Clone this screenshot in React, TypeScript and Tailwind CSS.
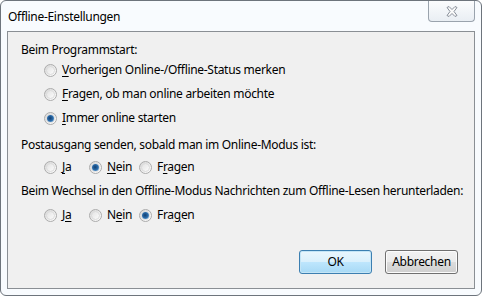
import React from 'react';

type Opt = { label: string; key: number; checked?: boolean };

function Radio({ checked }: { checked?: boolean }) {
  return (
    <span className="relative inline-flex h-[13px] w-[13px] shrink-0 items-center justify-center rounded-full border border-[#acacac] bg-[linear-gradient(135deg,#d6d6d6,#f4f4f4_70%,#ffffff)]">
      <span className="h-[9px] w-[9px] rounded-full border border-[#dcdcdc] bg-[linear-gradient(135deg,#e4e4e4,#fbfbfb)]" />
      {checked && (
        <span className="absolute h-[7px] w-[7px] rounded-full bg-[radial-gradient(circle_at_45%_45%,#123f70,#2a6aa8_50%,#8cc4ee)]" />
      )}
    </span>
  );
}

function Label({ text, k }: { text: string; k: number }) {
  return (
    <span className="whitespace-nowrap">
      {text.slice(0, k)}
      <span className="underline underline-offset-2">{text[k]}</span>
      {text.slice(k + 1)}
    </span>
  );
}

function Option({ o, className = '' }: { o: Opt; className?: string }) {
  return (
    <div className={`flex items-center gap-[5px] ${className}`}>
      <Radio checked={o.checked} />
      <Label text={o.label} k={o.key} />
    </div>
  );
}

const startOpts: Opt[] = [
  { label: 'Vorherigen Online-/Offline-Status merken', key: 0 },
  { label: 'Fragen, ob man online arbeiten möchte', key: 0 },
  { label: 'Immer online starten', key: 0, checked: true },
];

const sendOpts: Opt[] = [
  { label: 'Ja', key: 0 },
  { label: 'Nein', key: 0, checked: true },
  { label: 'Fragen', key: 1 },
];

const downOpts: Opt[] = [
  { label: 'Ja', key: 1 },
  { label: 'Nein', key: 1 },
  { label: 'Fragen', key: 3, checked: true },
];

function InlineRow({ opts }: { opts: Opt[] }) {
  return (
    <div className="flex h-6 items-center pl-[23px]">
      <Option o={opts[0]} className="w-[45px]" />
      <Option o={opts[1]} className="w-[50px]" />
      <Option o={opts[2]} />
    </div>
  );
}

export default function App() {
  return (
    <div
      className="h-[297px] w-[483px] bg-white text-[12px] leading-none tracking-[-0.3px] text-black"
      style={{ fontFamily: '"Segoe UI", "Noto Sans", "Open Sans", sans-serif' }}
    >
      <div className="flex h-[296px] w-[482px] flex-col rounded-[6px] border border-[#6d747c] bg-[#f8fbfe] px-[6px] pb-[6px]">
        <div className="flex h-[30px] justify-between">
          <div className="pl-[1px] pt-[10px]">Offline-Einstellungen</div>
          <div className="flex h-[21px] w-[47px] items-center justify-center rounded-b-[4px] border border-t-0 border-[#9aa3ad] bg-[linear-gradient(#fbfcfd,#e9eef3)]">
            <svg width="12" height="11" viewBox="0 0 12 11">
              <path
                d="M1 1.5 L3 0.5 L6 3.5 L9 0.5 L11 1.5 L8 5.5 L11 9.5 L9 10.5 L6 7.5 L3 10.5 L1 9.5 L4 5.5 Z"
                fill="#fafafa"
                stroke="#7d8590"
                strokeWidth="0.9"
                strokeLinejoin="round"
              />
            </svg>
          </div>
        </div>
        <div className="flex flex-1 flex-col border border-[#8a8f94] bg-[#f0f0f0] pl-[13px] pt-[10px]">
          <div className="flex h-[15px] items-center">Beim Programmstart:</div>
          <div className="flex flex-col pl-[23px] pt-[1px]">
            {startOpts.map((o) => (
              <Option key={o.label} o={o} className="h-6" />
            ))}
          </div>
          <div className="flex h-[25px] items-end pb-[4px] whitespace-nowrap">Postausgang senden, sobald man im Online-Modus ist:</div>
          <InlineRow opts={sendOpts} />
          <div className="flex h-[24px] items-center whitespace-nowrap">Beim Wechsel in den Offline-Modus Nachrichten zum Offline-Lesen herunterladen:</div>
          <InlineRow opts={downOpts} />
          <div className="flex flex-1 items-end justify-end gap-[13px] pb-[14px] pr-[16px]">
            <button className="flex h-6 w-[73px] items-center justify-center rounded-[3px] border border-[#3c7fb1] bg-[linear-gradient(#eaf6fd,#d9f0fc_50%,#bee6fd_50%,#a7d9f5)] shadow-[inset_0_0_0_1px_#c4e5f6]">
              OK
            </button>
            <button className="flex h-6 w-[73px] items-center justify-center rounded-[3px] border border-[#707070] bg-[linear-gradient(#f2f2f2,#ebebeb_50%,#dddddd_50%,#cfcfcf)] shadow-[inset_0_0_0_1px_#fcfcfc]">
              Abbrechen
            </button>
          </div>
        </div>
      </div>
    </div>
  );
}
